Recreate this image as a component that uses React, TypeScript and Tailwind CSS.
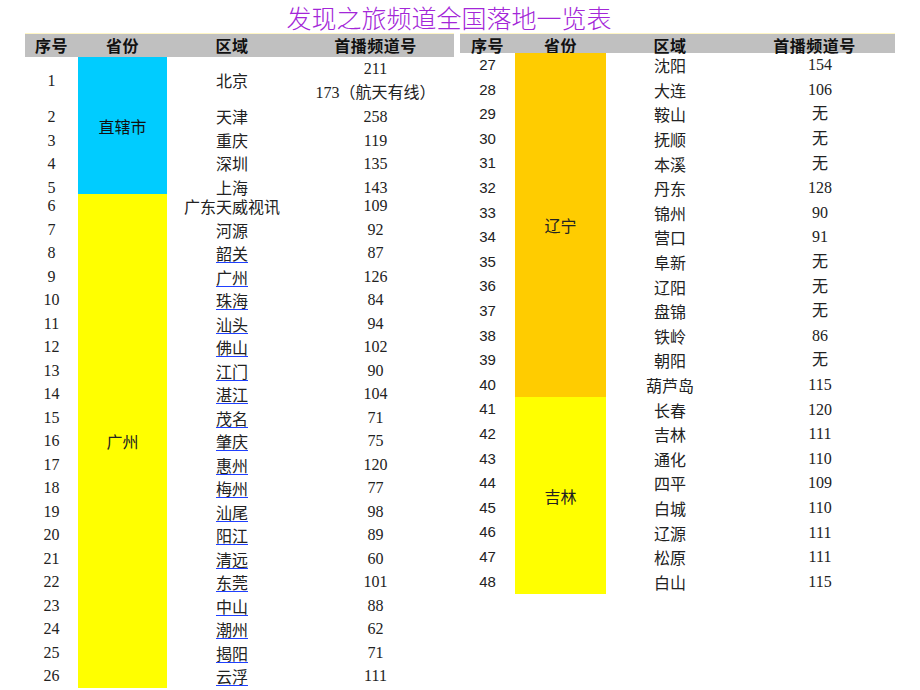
import React from "react";

type Row = { no: number; area: string; ch: string[] };

const serif = "font-['Liberation_Serif','Noto_Sans_CJK_SC',serif]";
const cjk = "font-['Noto_Sans_CJK_SC',sans-serif]";

const beijing: Row[] = [
  { no: 1, area: "北京", ch: ["211", "173（航天有线）"] },
  { no: 2, area: "天津", ch: ["258"] },
  { no: 3, area: "重庆", ch: ["119"] },
  { no: 4, area: "深圳", ch: ["135"] },
  { no: 5, area: "上海", ch: ["143"] },
];

const guangzhou: [string, string][] = [
  ["广东天威视讯", "109"],
  ["河源", "92"],
  ["韶关", "87"],
  ["广州", "126"],
  ["珠海", "84"],
  ["汕头", "94"],
  ["佛山", "102"],
  ["江门", "90"],
  ["湛江", "104"],
  ["茂名", "71"],
  ["肇庆", "75"],
  ["惠州", "120"],
  ["梅州", "77"],
  ["汕尾", "98"],
  ["阳江", "89"],
  ["清远", "60"],
  ["东莞", "101"],
  ["中山", "88"],
  ["潮州", "62"],
  ["揭阳", "71"],
  ["云浮", "111"],
];

const liaoning: [string, string][] = [
  ["沈阳", "154"],
  ["大连", "106"],
  ["鞍山", "无"],
  ["抚顺", "无"],
  ["本溪", "无"],
  ["丹东", "128"],
  ["锦州", "90"],
  ["营口", "91"],
  ["阜新", "无"],
  ["辽阳", "无"],
  ["盘锦", "无"],
  ["铁岭", "86"],
  ["朝阳", "无"],
  ["葫芦岛", "115"],
];

const jilin: [string, string][] = [
  ["长春", "120"],
  ["吉林", "111"],
  ["通化", "110"],
  ["四平", "109"],
  ["白城", "110"],
  ["辽源", "111"],
  ["松原", "111"],
  ["白山", "115"],
];

function Header({ cols, short }: { cols: string; short?: boolean }) {
  return (
    <div
      className={`grid ${cols} ${short ? "h-[20px]" : "h-[24px]"} border-t border-[#fff6c4] bg-[#c0c0c0] ${cjk} text-[16px] font-bold tracking-[0.5px] text-[#111]`}
    >
      {["序号", "省份", "区域", "首播频道号"].map((h) => (
        <div key={h} className="flex justify-center leading-[23px] whitespace-nowrap">
          {h}
        </div>
      ))}
    </div>
  );
}

function LeftTable() {
  const cols = "grid-cols-[53px_89px_130px_157px]";
  return (
    <div className="w-[429px] text-[16px] text-[#222]">
      <Header cols={cols} />

      {/* 直辖市 */}
      <div className={`grid ${cols} grid-rows-[48px_23.6px_23.6px_23.6px_18.6px] ${serif}`}>
        {beijing.map((r, i) => (
          <React.Fragment key={r.no}>
            <div className={`flex justify-center ${i === 0 ? "items-center" : "items-start"} leading-[23.6px]`}>
              {r.no}
            </div>
            {i === 0 && (
              <div className={`row-span-5 flex items-center justify-center bg-[#00ccff] ${cjk} text-[#111]`}>
                直辖市
              </div>
            )}
            <div className={`flex justify-center ${i === 0 ? "items-center" : "items-start"} leading-[23.6px] ${cjk}`}>
              {r.area}
            </div>
            <div className={`flex flex-col ${i === 0 ? "justify-center" : "justify-start"} items-center leading-[23.6px] whitespace-nowrap`}>
              {r.ch.map((c) => (
                <span key={c}>{c}</span>
              ))}
            </div>
          </React.Fragment>
        ))}
      </div>

      {/* 广州 */}
      <div className={`grid ${cols} auto-rows-[23.5px] ${serif}`}>
        {guangzhou.map(([area, ch], i) => (
          <React.Fragment key={area}>
            <div className="flex items-center justify-center">{i + 6}</div>
            {i === 0 && (
              <div className={`row-span-21 flex items-center justify-center bg-[#ffff00] ${cjk} text-[#222]`}>
                广州
              </div>
            )}
            <div className={`flex items-center justify-center whitespace-nowrap ${cjk}`}>
              <span
                className={
                  i >= 2
                    ? "underline decoration-[#1f3fff] decoration-1 underline-offset-[2px] leading-[20px]"
                    : "leading-[20px]"
                }
              >
                {area}
              </span>
            </div>
            <div className="flex items-center justify-center">{ch}</div>
          </React.Fragment>
        ))}
      </div>
    </div>
  );
}

function Group({
  start,
  rows,
  name,
  span,
  color,
}: {
  start: number;
  rows: [string, string][];
  name: string;
  span: string;
  color: string;
}) {
  return (
    <div className="grid grid-cols-[55px_91px_128px_161px] auto-rows-[24.6px]">
      {rows.map(([area, ch], i) => (
        <React.Fragment key={area}>
          <div className="flex items-center justify-center font-['Liberation_Sans',sans-serif] text-[15px]">
            {start + i}
          </div>
          {i === 0 && (
            <div className={`${span} ${color} flex items-center justify-center ${cjk} text-[#222]`}>{name}</div>
          )}
          <div className={`flex items-center justify-center ${cjk}`}>{area}</div>
          <div className={`flex items-center justify-center pl-[11px] ${serif}`}>{ch}</div>
        </React.Fragment>
      ))}
    </div>
  );
}

function RightTable() {
  return (
    <div className="w-[435px] text-[16px] text-[#222]">
      <Header cols="grid-cols-[55px_91px_128px_161px]" short />
      <Group start={27} rows={liaoning} name="辽宁" span="row-span-14" color="bg-[#ffcc00]" />
      <Group start={41} rows={jilin} name="吉林" span="row-span-8" color="bg-[#ffff00]" />
    </div>
  );
}

export default function App() {
  return (
    <div className="w-[920px] h-[690px] overflow-hidden bg-white">
      <h1
        className={`h-[33px] pr-[22px] text-center text-[25px] leading-[34px] text-[#a326d8] ${cjk} font-light`}
      >
        发现之旅频道全国落地一览表
      </h1>
      <div className="flex items-start gap-[6px] pl-[25px]">
        <LeftTable />
        <RightTable />
      </div>
    </div>
  );
}
